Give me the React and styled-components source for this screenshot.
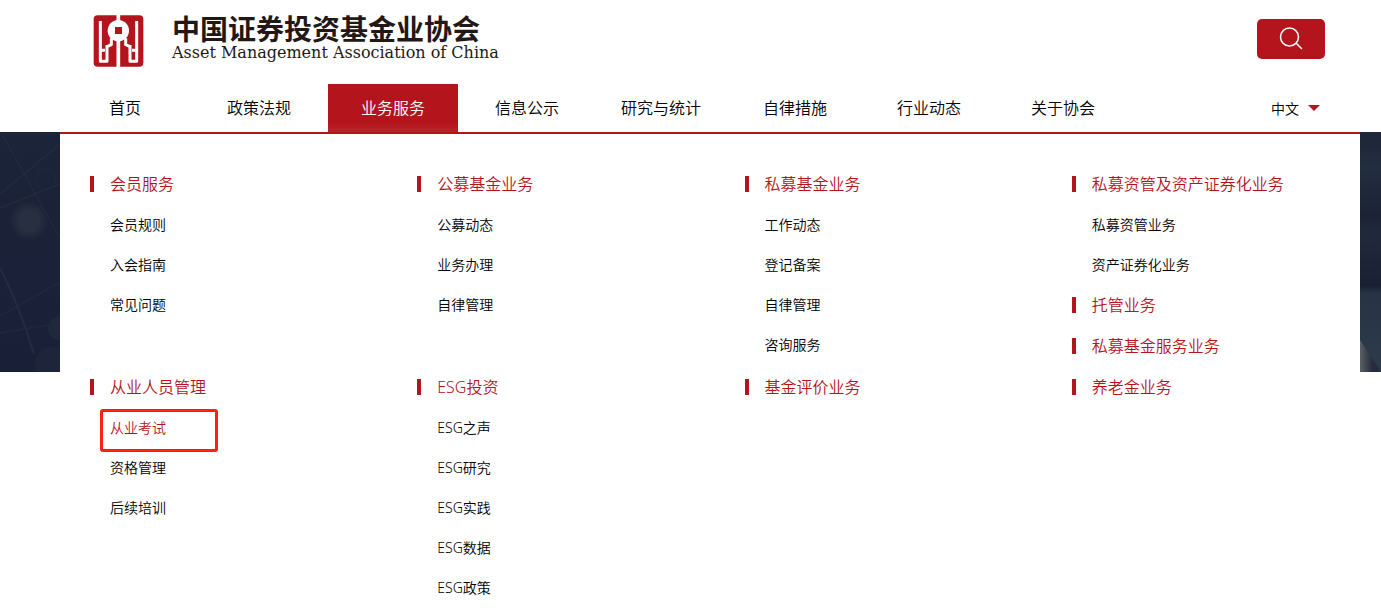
import { useState } from "react";
import styled, { createGlobalStyle } from "styled-components";

const GlobalStyle = createGlobalStyle`
  * {
    box-sizing: border-box;
  }

  body {
    margin: 0;
    background: #fff;
    color: #000;
    font-family: "Noto Sans", "Noto Sans CJK SC", sans-serif;
    font-weight: 350;
  }

  ul {
    list-style: none;
    margin: 0;
    padding: 0;
  }

  a {
    color: inherit;
    text-decoration: none;
  }
`;

const Header = styled.header`
  padding: 0 21px 0 60px;
`;

const TopBar = styled.div`
  display: flex;
  justify-content: space-between;
  align-items: center;
  height: 84px;
  padding: 0 35px 6px 33px;
`;

const Brand = styled.a`
  display: flex;
  align-items: center;
  gap: 28px;
  padding-top: 4px;
  color: #231815;
`;

const BrandText = styled.span`
  display: flex;
  flex-direction: column;
  padding-bottom: 4px;
`;

const BrandName = styled.span`
  font-family: "Noto Sans CJK SC", sans-serif;
  font-size: 28px;
  font-weight: 700;
  line-height: 28px;
`;

const BrandLatin = styled.span`
  font-family: "DejaVu Serif", serif;
  font-size: 16px;
  font-weight: 400;
  line-height: 22px;
`;

const SearchButton = styled.button`
  display: flex;
  align-items: center;
  justify-content: center;
  width: 68px;
  height: 40px;
  padding: 0;
  border: none;
  border-radius: 5px;
  background: #b4151d;
  color: #fff;
  cursor: pointer;
`;

const Nav = styled.nav`
  display: flex;
  justify-content: space-between;
  height: 48px;
`;

const NavList = styled.ul`
  display: flex;
  gap: 4px;
`;

const NavLink = styled.a`
  display: block;
  width: 130px;
  line-height: 48px;
  font-size: 16px;
  text-align: center;
  white-space: nowrap;
  color: ${({ $active }) => ($active ? "#fff" : "#000")};
  background: ${({ $active }) =>
    $active ? "linear-gradient(#b4151d 80%, #b92229)" : "transparent"};
`;

const LangButton = styled.button`
  display: flex;
  align-items: center;
  gap: 9px;
  padding: 0 40px 0 0;
  border: none;
  background: none;
  color: #000;
  font: inherit;
  font-size: 14px;
  cursor: pointer;
`;

const Caret = styled.span`
  border: 6px solid transparent;
  border-top-color: #b4151d;
  border-bottom: none;
`;

const Stage = styled.main`
  display: grid;
  grid-template-columns: 60px minmax(0, 1fr) 21px;
  align-items: start;
`;

const BannerArt = styled.svg`
  display: block;
  width: 100%;
  height: 240px;
`;

const MegaMenu = styled.div`
  display: grid;
  grid-template-columns: repeat(4, minmax(0, 1fr));
  column-gap: 69px;
  padding: 30px 30px 0;
  border-top: 2px solid #b4151d;
  background: #fff;
`;

const GroupTitle = styled.h2`
  display: flex;
  gap: 16px;
  height: 41px;
  margin: 0;
  font-size: 16px;
  font-weight: 350;
  line-height: 40px;
  white-space: nowrap;
  color: #b4151d;

  &::before {
    content: "";
    width: 4px;
    height: 16px;
    margin-top: 12px;
    background: #b4151d;
  }
`;

const GroupItem = styled.li`
  position: relative;
  padding-left: 20px;
  line-height: 40px;
  font-size: 14px;
  color: ${({ $marked }) => ($marked ? "#b4151d" : "#000")};
`;

const Marker = styled.span`
  position: absolute;
  top: 1px;
  left: 10px;
  width: 118px;
  height: 43px;
  border: 3px solid #ff2014;
  border-radius: 3px;
  pointer-events: none;
`;

const NAV = ["首页", "政策法规", "业务服务", "信息公示", "研究与统计", "自律措施", "行业动态", "关于协会"];

// each cell of the mega menu can stack several groups
const CELLS = [
  [{ title: "会员服务", items: ["会员规则", "入会指南", "常见问题"] }],
  [{ title: "公募基金业务", items: ["公募动态", "业务办理", "自律管理"] }],
  [{ title: "私募基金业务", items: ["工作动态", "登记备案", "自律管理", "咨询服务"] }],
  [
    { title: "私募资管及资产证券化业务", items: ["私募资管业务", "资产证券化业务"] },
    { title: "托管业务", items: [] },
    { title: "私募基金服务业务", items: [] },
  ],
  [{ title: "从业人员管理", items: ["从业考试", "资格管理", "后续培训"] }],
  [{ title: "ESG投资", items: ["ESG之声", "ESG研究", "ESG实践", "ESG数据", "ESG政策"] }],
  [{ title: "基金评价业务", items: [] }],
  [{ title: "养老金业务", items: [] }],
];

const Emblem = () => (
  <svg width="51" height="52" viewBox="0 0 153 156" aria-hidden="true">
    <rect x="2" y="1" width="149" height="154" rx="12" fill="#b4151d" />
    <circle cx="76" cy="47" r="32" fill="#fff" />
    <path d="M76 0v30M76 74v82" stroke="#fff" strokeWidth="11" />
    <rect x="66" y="36" width="21" height="21" fill="#b4151d" />
    <g fill="none" stroke="#fff" strokeWidth="9" strokeLinejoin="round">
      <path d="M22 18v121h20V90M22 106h14M55 70v19l-13 6" />
      <path d="M131 18v121h-20V90M131 106h-14M98 70v19l13 6" />
    </g>
  </svg>
);

const SearchIcon = () => (
  <svg width="24" height="24" viewBox="0 0 24 24" fill="none" stroke="currentColor" strokeWidth="1.5">
    <circle cx="10.5" cy="10" r="9" />
    <path d="M17 16l6 6" />
  </svg>
);

const LeftArt = () => (
  <BannerArt viewBox="0 0 60 240" preserveAspectRatio="none" aria-hidden="true">
    <defs>
      <linearGradient id="leftSky" x2="0" y2="1">
        <stop offset="0" stopColor="#1c2439" />
        <stop offset="1" stopColor="#191f37" />
      </linearGradient>
      <radialGradient id="leftGlow">
        <stop offset="0.5" stopColor="#282f40" />
        <stop offset="1" stopColor="#282f40" stopOpacity="0" />
      </radialGradient>
    </defs>
    <rect width="60" height="240" fill="url(#leftSky)" />
    <circle cx="29" cy="89" r="20" fill="url(#leftGlow)" />
    <g fill="none" stroke="#2b3346" strokeOpacity="0.6">
      <path d="M3 4L60 106" />
      <path d="M0 136Q20 175 34 222" strokeWidth="2" />
      <path d="M0 62L60 12M0 76L60 52M0 184L60 150M0 201L60 191" strokeOpacity="0.35" strokeWidth="2" />
      <circle cx="45" cy="47" r="10" strokeOpacity="0.35" />
    </g>
    <circle cx="60" cy="196" r="12" fill="#20283c" />
    <circle cx="52" cy="232" r="17" fill="#1e253b" />
  </BannerArt>
);

const RightArt = () => (
  <BannerArt viewBox="0 0 21 240" preserveAspectRatio="none" aria-hidden="true">
    <defs>
      <linearGradient id="rightSky" x2="0" y2="1">
        <stop offset="0" stopColor="#1e2639" />
        <stop offset="0.15" stopColor="#222d40" />
        <stop offset="0.35" stopColor="#1b2236" />
        <stop offset="0.42" stopColor="#21293c" />
        <stop offset="0.64" stopColor="#1a2033" />
        <stop offset="0.67" stopColor="#273344" />
        <stop offset="1" stopColor="#2e3b4b" />
      </linearGradient>
      <linearGradient id="rightEdge" x2="1" y2="0">
        <stop offset="0" stopColor="#5a5f66" />
        <stop offset="0.6" stopColor="#262b3d" />
      </linearGradient>
    </defs>
    <rect width="21" height="240" fill="url(#rightSky)" />
    <path d="M0 208L21 240H0z" fill="url(#rightEdge)" />
  </BannerArt>
);

const MenuGroup = ({ title, items }) => (
  <section>
    <GroupTitle>
      <a href="#">{title}</a>
    </GroupTitle>
    {items.length > 0 && (
      <ul>
        {items.map((item) => (
          <GroupItem key={item} $marked={item === "从业考试"}>
            <a href="#">{item}</a>
            {item === "从业考试" && <Marker />}
          </GroupItem>
        ))}
      </ul>
    )}
  </section>
);

const App = () => {
  const [active, setActive] = useState("业务服务");

  return (
    <>
      <GlobalStyle />
      <Header>
        <TopBar>
          <Brand href="#">
            <Emblem />
            <BrandText>
              <BrandName>中国证券投资基金业协会</BrandName>
              <BrandLatin>Asset Management Association of China</BrandLatin>
            </BrandText>
          </Brand>
          <SearchButton type="button" aria-label="搜索">
            <SearchIcon />
          </SearchButton>
        </TopBar>
        <Nav>
          <NavList>
            {NAV.map((name) => (
              <li key={name}>
                <NavLink href="#" $active={name === active} onClick={() => setActive(name)}>
                  {name}
                </NavLink>
              </li>
            ))}
          </NavList>
          <LangButton type="button">
            中文 <Caret />
          </LangButton>
        </Nav>
      </Header>
      <Stage>
        <LeftArt />
        <MegaMenu>
          {CELLS.map((groups) => (
            <div key={groups[0].title}>
              {groups.map((group) => (
                <MenuGroup key={group.title} {...group} />
              ))}
            </div>
          ))}
        </MegaMenu>
        <RightArt />
      </Stage>
    </>
  );
};

export default App;
